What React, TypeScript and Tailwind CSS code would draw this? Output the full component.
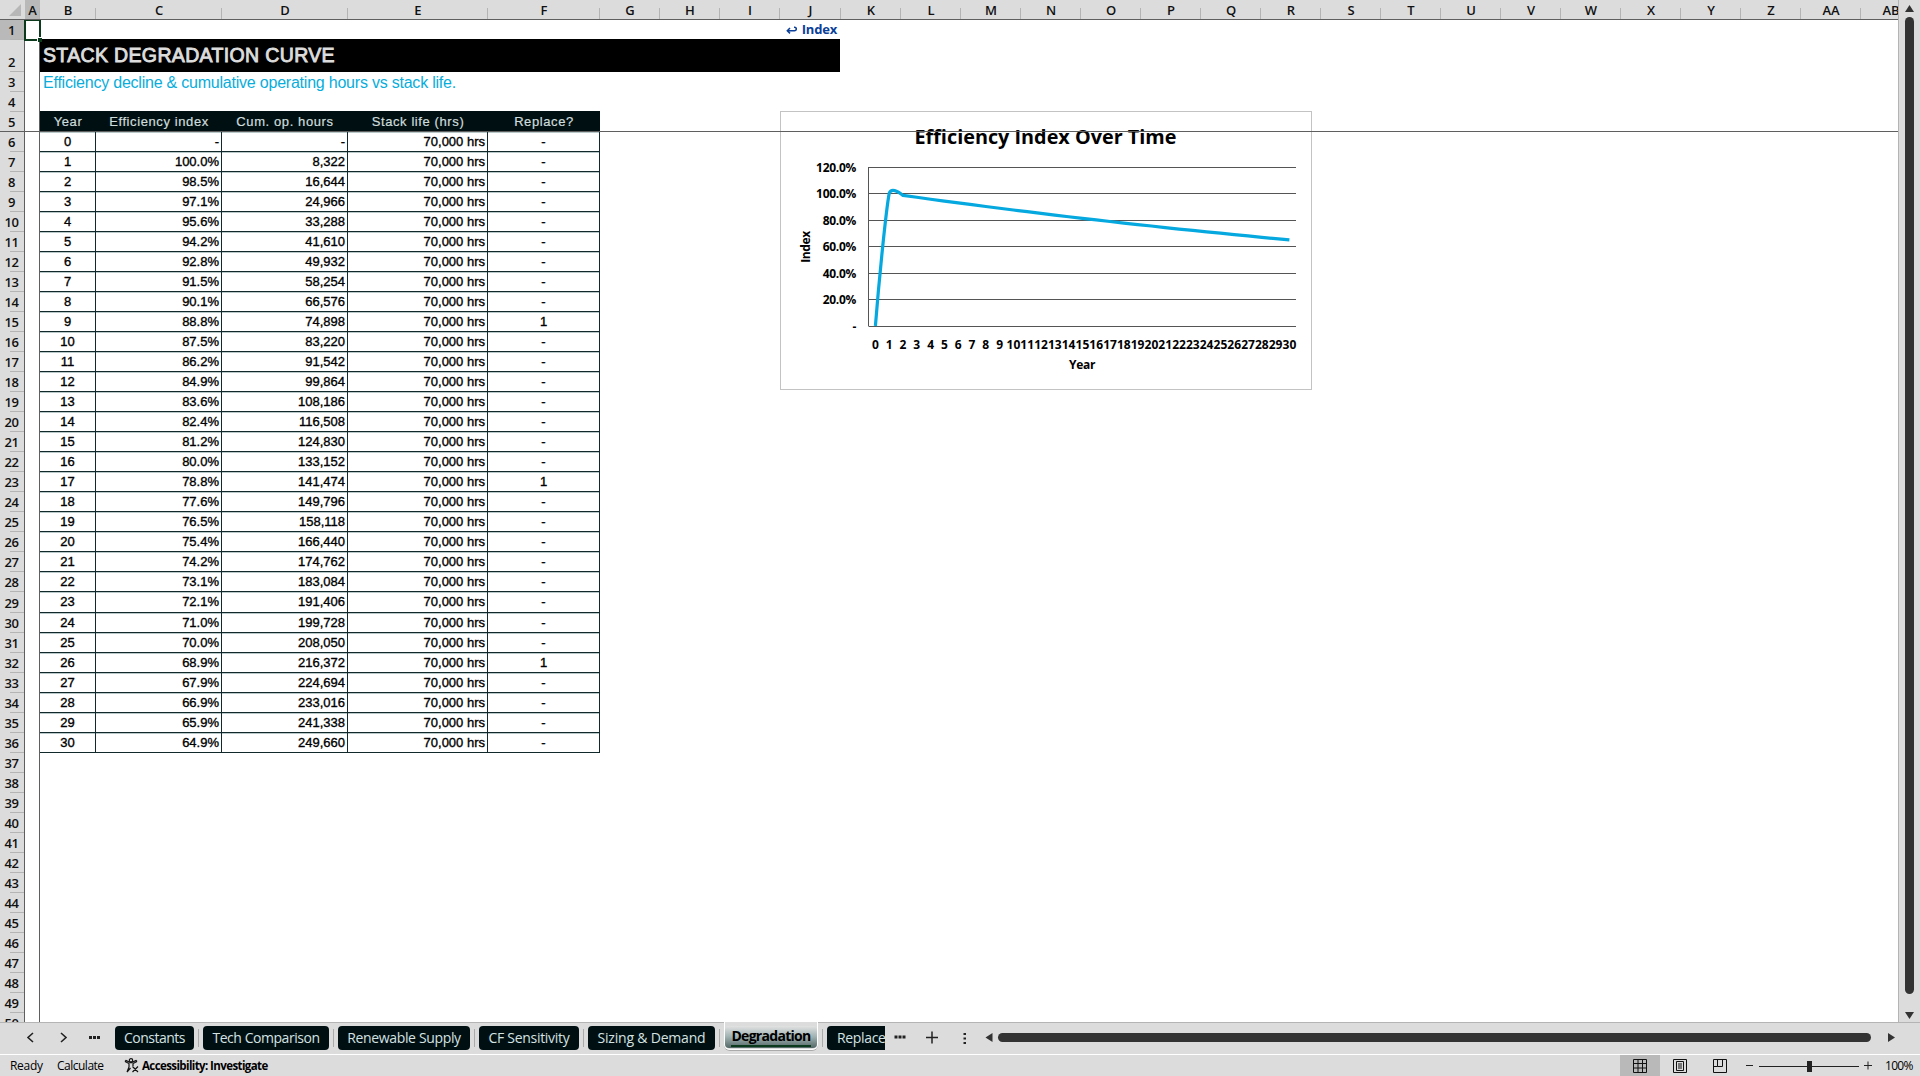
import { Fragment } from "react";

const columns = [
  { name: "A", width: 15 },
  { name: "B", width: 56 },
  { name: "C", width: 126 },
  { name: "D", width: 126 },
  { name: "E", width: 140 },
  { name: "F", width: 112 },
  ..."GHIJKLMNOPQRSTUVWXYZ".split("").map((name) => ({
    name,
    width: name === "J" ? 61 : 60,
  })),
  { name: "AA", width: 60 },
  { name: "AB", width: 60 },
];

const rowHeight = (row: number) => (row === 2 ? 32 : row === 29 ? 21 : 20);
const rowNumbers = Array.from({ length: 50 }, (_, i) => i + 1);

const headers = ["Year", "Efficiency index", "Cum. op. hours", "Stack life (hrs)", "Replace?"];

const efficiency = [
  "-", "100.0%", "98.5%", "97.1%", "95.6%", "94.2%", "92.8%", "91.5%", "90.1%", "88.8%", "87.5%",
  "86.2%", "84.9%", "83.6%", "82.4%", "81.2%", "80.0%", "78.8%", "77.6%", "76.5%", "75.4%",
  "74.2%", "73.1%", "72.1%", "71.0%", "70.0%", "68.9%", "67.9%", "66.9%", "65.9%", "64.9%",
];
const replaceYears = [9, 17, 26];

const rows = efficiency.map((eff, year) => ({
  year,
  eff,
  hours: year === 0 ? "-" : (year * 8322).toLocaleString("en-US"),
  replace: replaceYears.includes(year) ? "1" : "-",
}));

const tabs = [
  { name: "Constants", width: 79, track: "tracking-[-0.5px]" },
  { name: "Tech Comparison", width: 126, track: "tracking-[-0.45px]" },
  { name: "Renewable Supply", width: 132, track: "tracking-[-0.35px]" },
  { name: "CF Sensitivity", width: 100, track: "tracking-[-0.3px]" },
  { name: "Sizing & Demand", width: 127, track: "tracking-[-0.2px]" },
];

function ColumnHeader() {
  return (
    <div className="flex h-5 overflow-hidden border-b border-[#5f5f5f] bg-[#dcdcdc]">
      <div className="flex w-[25px] shrink-0 items-end justify-end pr-1 pb-[3px]">
        <svg width="12" height="12">
          <path d="M12 0V12H0Z" fill="#b7b7b7" />
        </svg>
      </div>
      {columns.map((c) => (
        <div
          key={c.name}
          style={{ width: c.width }}
          className={`flex shrink-0 flex-col justify-end ${c.name === "A" ? "bg-[#b9b9b9]" : ""}`}
        >
          <div className="relative flex h-[19px] items-center justify-center pt-0.5 text-[13px] font-semibold text-[#111]">
            {c.name}
            <span className="absolute right-0 bottom-0 h-[11px] w-px bg-[#b4b4b4]" />
          </div>
        </div>
      ))}
    </div>
  );
}

function RowHeader() {
  return (
    <div className="w-[25px] shrink-0 border-r border-[#5f5f5f] bg-[#dcdcdc]">
      {rowNumbers.map((n) => (
        <div
          key={n}
          style={{ height: rowHeight(n) }}
          className={`relative flex items-end justify-center pr-px pb-px text-[13px] leading-[18px] font-semibold tracking-[-0.5px] text-[#111] ${
            n === 1 ? "bg-[#b9b9b9]" : ""
          }`}
        >
          {n}
          <span className="absolute right-0 bottom-0 h-px w-3.5 bg-[#b4b4b4]" />
        </div>
      ))}
    </div>
  );
}

function DataTable() {
  const cell =
    "border-r border-b border-[#12292b] leading-[19px] shadow-[inset_0_1px_0_#b9c8c8] [-webkit-text-stroke:0.35px]";
  return (
    <div className="grid w-[560px] grid-cols-[56px_126px_126px_140px_112px] font-['Liberation_Sans',Arial,sans-serif] text-[13px] text-black">
      {headers.map((h) => (
        <div
          key={h}
          className="-mt-px h-[21px] bg-[#001012] pt-px text-center leading-[19px] tracking-[0.6px] text-[#cfdcdc] [-webkit-text-stroke:0.2px]"
        >
          {h}
        </div>
      ))}
      {rows.map((r) => (
        <Fragment key={r.year}>
          <div style={{ height: rowHeight(r.year + 6) }} className={`${cell} text-center`}>
            {r.year}
          </div>
          <div className={`${cell} pr-0.5 text-right`}>{r.eff}</div>
          <div className={`${cell} pr-0.5 text-right`}>{r.hours}</div>
          <div className={`${cell} pr-0.5 text-right`}>70,000 hrs</div>
          <div className={`${cell} text-center`}>{r.replace}</div>
        </Fragment>
      ))}
    </div>
  );
}

function EfficiencyChart() {
  const left = 88.5;
  const bottom = 215;
  const step = 13.8;
  const x = (year: number) => left + step * (year + 0.5);
  const y = (value: number) => bottom - value * 1.326;
  const points = efficiency.map((e, i) => [x(i), y(i === 0 ? 0 : parseFloat(e))]);
  const tail = points.slice(3).map((p) => `L${p[0]} ${p[1]}`).join(" ");
  const line = `M${points[0][0]} ${points[0][1]} C${points[0][0] + 4} ${y(38)} ${points[1][0] - 3} ${y(88)} ${points[1][0]} ${y(100)} C${points[1][0] + 2} ${y(104)} ${points[1][0] + 8} ${y(102)} ${points[2][0]} ${points[2][1]} ${tail}`;

  return (
    <svg width="532" height="279" className="block font-['Open_Sans','Noto_Sans',sans-serif] font-bold">
      <rect x="0.5" y="0.5" width="531" height="278" fill="white" stroke="#c3c3c3" />
      <text x="265.500" y="33" fontSize="20" textAnchor="middle" textLength="262" lengthAdjust="spacingAndGlyphs">
        Efficiency Index Over Time
      </text>
      {[0, 20, 40, 60, 80, 100, 120].map((v) => (
        <g key={v}>
          <path d={`M${left} ${Math.round(y(v)) + 0.5}H516`} stroke="#555" strokeWidth="1.200" />
          <text x="76" y={y(v) + 5} fontSize="12" textAnchor="end" letterSpacing="-0.3">
            {v === 0 ? "-" : `${v}.0%`}
          </text>
        </g>
      ))}
      <path d={`M${left} 56V215`} stroke="#555" />
      <path d={line} fill="none" stroke="#05a8df" strokeWidth="3.200" strokeLinejoin="round" />
      {points.map((p, i) => (
        <text key={i} x={p[0]} y="237.500" fontSize="12" textAnchor="middle">
          {i}
        </text>
      ))}
      <text x="302" y="257.500" fontSize="12" textAnchor="middle" letterSpacing="-0.3">
        Year
      </text>
      <text transform="translate(30 136) rotate(-90)" fontSize="12" textAnchor="middle" letterSpacing="-0.4">
        Index
      </text>
    </svg>
  );
}

function Sheet() {
  return (
    <div className="relative flex h-[1002px] overflow-hidden bg-white">
      <RowHeader />
      <div className="w-[15px] shrink-0 border-r border-[#5f5f5f]" />
      <div className="flex-1">
        <div className="flex h-[19px] w-[800px] items-center justify-end pr-[3px] text-[13px] font-bold tracking-[-0.2px] text-[#0b3f9a]">
          <svg width="11" height="8" className="mr-[5px]" fill="none" stroke="#0b3f9a" strokeWidth="1.500">
            <path d="M8 1.200H8.500A1.800 1.800 0 0 1 8.500 4.800H1.500M4 2L1.300 4.800L4 7.400" />
          </svg>
          <span>Index</span>
        </div>
        <div className="h-[33px] w-[800px] bg-black pl-[3px] font-['Liberation_Sans',Arial,sans-serif] text-[19.500px] leading-[32px] tracking-[0.35px] text-[#dcdcdc] [-webkit-text-stroke:0.9px]">
          STACK DEGRADATION CURVE
        </div>
        <div className="h-5 pt-px pl-[3px] font-['Liberation_Sans',Arial,sans-serif] text-[16px] leading-[20px] tracking-[-0.22px] text-[#08addb]">
          Efficiency decline &amp; cumulative operating hours vs stack life.
        </div>
        <div className="flex pt-5">
          <DataTable />
          <div className="-mt-px ml-[180px]">
            <EfficiencyChart />
          </div>
        </div>
      </div>
      {/* freeze pane line */}
      <div className="absolute top-[111px] right-0 left-0 h-px bg-[#5f5f5f]" />
      {/* active cell */}
      <div className="absolute -top-px left-6 h-[22px] w-[17px] border-2 border-[#0b3a1c]" />
      <div className="absolute top-[17px] left-[37px] size-[5px] border-t border-l border-white bg-[#0b3a1c]" />
    </div>
  );
}

function TabBar() {
  return (
    <div className="relative flex h-8 items-start border-t border-[#b4b4b4] bg-[#dcdcdc] pt-[3px] text-[14px] text-[#d5e2e2]">
      <div className="flex h-6 w-[115px] shrink-0 items-center pl-[25px]">
        <svg width="76" height="14" fill="none" stroke="#222" strokeWidth="1.600">
          <path d="M8 2L3 6.500L8 11M36 2L41 6.500L36 11" />
          <path d="M64 6.500H67M68 6.500H71M72 6.500H75" strokeWidth="2.800" />
        </svg>
      </div>
      {tabs.map((t) => (
        <Fragment key={t.name}>
          <div
            style={{ width: t.width }}
            className={`h-6 shrink-0 rounded bg-[#001012] text-center leading-[24px] ${t.track}`}
          >
            {t.name}
          </div>
          <div className="flex h-6 w-[9px] shrink-0 items-center justify-center">
            <span className="h-[18px] w-px bg-[#aaa]" />
          </div>
        </Fragment>
      ))}
      <div className="-mt-1 h-[29px] w-[94px] shrink-0 rounded-b-md border-b border-[#aaa] bg-[#dcdcdc]">
        <div className="h-full w-full rounded-b-md border border-t-0 border-white pt-1 pb-px">
          <div className="h-full w-full rounded bg-linear-to-b from-[#e2e2e2] via-[#9fb0b0] to-[#556868] px-[6px] font-bold text-black">
            <div className="h-[21px] border-b-2 border-[#0b3a1c] text-center text-[14px] leading-[19px] tracking-[-0.7px] whitespace-nowrap">
              Degradation
            </div>
          </div>
        </div>
      </div>
      <div className="flex h-6 w-[9px] shrink-0 items-center justify-center">
        <span className="h-[18px] w-px bg-[#aaa]" />
      </div>
      <div className="h-6 w-[58px] shrink-0 overflow-hidden rounded-l bg-[#001012] pl-[10px] leading-[24px] tracking-[-0.35px]">
        Replace
      </div>
      <svg width="113" height="24" className="shrink-0" fill="none" stroke="#222" strokeWidth="1.500">
        <path d="M9.500 11H12.500M13.500 11H16.500M17.500 11H20.500" strokeWidth="2.800" />
        <path d="M41 11.500H53M47 5.500V17.500" />
        <path d="M78.500 8H81M78.500 12.500H81M78.500 17H81" strokeWidth="2" />
        <path d="M107.500 7V16L100.500 11.500Z" fill="#333" stroke="none" />
      </svg>
      <div className="mt-[7px] h-[9px] w-[873px] shrink-0 rounded-full bg-[#333]" />
      <svg width="24" height="24" className="shrink-0">
        <path d="M17 7V16L24 11.500Z" fill="#333" />
      </svg>
    </div>
  );
}

function StatusBar() {
  return (
    <div className="flex h-[22px] items-center border-t border-white bg-[#dcdcdc] text-[12px] text-black">
      <span className="ml-2.5 w-[47px] tracking-[-0.3px]">Ready</span>
      <span className="w-[66px] tracking-[-0.5px]">Calculate</span>
      <svg width="15" height="15" viewBox="0 0 15 15" className="ml-px" fill="none" stroke="#111" strokeWidth="1.200">
        <circle cx="7" cy="2.300" r="1.700" />
        <path d="M1 3.500L5 5.500V9L3 14M13 3.500L9 5.500V8M1 3.500L2 2.500L7 4.800L12 2.500L13 3.500M8.500 8.500L14 14M14 8.500L8.500 14M3 14L6.500 10" />
      </svg>
      <span className="ml-[3px] text-[11.500px] font-bold tracking-[-0.6px]">Accessibility: Investigate</span>
      <div className="flex-1" />
      <div className="flex h-full w-10 items-center justify-center bg-[#b9b9b9]">
        <svg width="14" height="14" fill="none" stroke="#111">
          <path d="M.5.5H13.500V13.500H.5ZM.5 4.500H13.500M.5 9H13.500M5 .5V13.500M9.500 .5V13.500" />
        </svg>
      </div>
      <div className="flex w-10 items-center justify-center">
        <svg width="14" height="14" fill="none" stroke="#111">
          <path d="M.5.5H13.500V13.500H.5ZM3.500 2.500H10.500V11.500H3.500ZM5 5H9M5 7H9M5 9H9" />
        </svg>
      </div>
      <div className="flex w-10 items-center justify-center">
        <svg width="14" height="14" fill="none" stroke="#111">
          <path d="M.5.5H13.500V13.500H.5ZM4.500 .5V7.500H9.500V.5M.5 7.500H4.500" />
        </svg>
      </div>
      <svg width="137" height="20" className="shrink-0" stroke="#222">
        <path d="M6 9.500H13M19 10.500H119M124 9.500H132M128 5.500V13.500" />
        <path d="M67 5H72V16H67Z" fill="#222" stroke="none" />
      </svg>
      <span className="w-[43px] pl-2 tracking-[-0.7px]">100%</span>
    </div>
  );
}

export default function App() {
  return (
    <div className="h-[1076px] w-[1920px] overflow-hidden bg-[#dcdcdc] font-['Open_Sans','Noto_Sans',sans-serif]">
      <div className="flex h-[1022px]">
        <div className="w-[1899px] shrink-0 overflow-hidden border-r border-[#b4b4b4]">
          <ColumnHeader />
          <Sheet />
        </div>
        <div className="flex flex-1 flex-col items-center pt-[5px] pr-px">
          <svg width="9" height="7">
            <path d="M4.500 0L9 7H0Z" fill="#333" />
          </svg>
          <div className="mt-[5px] h-[977px] w-[9px] rounded-full bg-[#333]" />
          <svg width="9" height="7" className="mt-[18px]">
            <path d="M0 0H9L4.500 7Z" fill="#333" />
          </svg>
        </div>
      </div>
      <TabBar />
      <StatusBar />
    </div>
  );
}
